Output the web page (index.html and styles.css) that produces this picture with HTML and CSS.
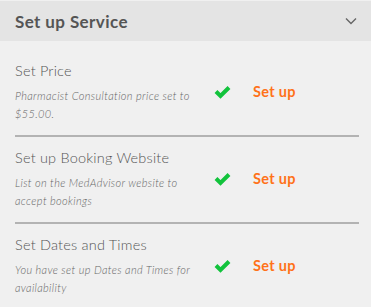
FILE: index.html
```html
<!DOCTYPE html>
<html>
<head>
<meta charset="utf-8">
<link rel="stylesheet" href="styles.css">
</head>
<body>
<div class="panel">
  <div class="header">
    <span class="header-title">Set up Service</span>
    <svg class="chev" width="12" height="8" viewBox="0 0 12 8"><polyline points="1,1.5 6,6.5 11,1.5" fill="none" stroke="#666" stroke-width="1.4"/></svg>
  </div>
  <div class="list">
    <div class="row">
      <div class="info">
        <div class="title">Set Price</div>
        <div class="desc">Pharmacist Consultation price set to $55.00.</div>
      </div>
      <svg class="check" width="17" height="14" viewBox="0 0 17 14"><polyline points="2,6.5 6.5,11 15,2.5" fill="none" stroke="#12c33c" stroke-width="4"/></svg>
      <span class="action">Set up</span>
    </div>
    <div class="row">
      <div class="info">
        <div class="title">Set up Booking Website</div>
        <div class="desc">List on the MedAdvisor website to accept bookings</div>
      </div>
      <svg class="check" width="17" height="14" viewBox="0 0 17 14"><polyline points="2,6.5 6.5,11 15,2.5" fill="none" stroke="#12c33c" stroke-width="4"/></svg>
      <span class="action">Set up</span>
    </div>
    <div class="row last">
      <div class="info">
        <div class="title">Set Dates and Times</div>
        <div class="desc">You have set up Dates and Times for availability</div>
      </div>
      <svg class="check" width="17" height="14" viewBox="0 0 17 14"><polyline points="2,6.5 6.5,11 15,2.5" fill="none" stroke="#12c33c" stroke-width="4"/></svg>
      <span class="action">Set up</span>
    </div>
  </div>
</div>
</body>
</html>
```
FILE: styles.css
```css
html, body {
  margin: 0;
  padding: 0;
  background: #f0f0f0;
}
body {
  font-family: Lato, "Open Sans", sans-serif;
  width: 371px;
  height: 307px;
  overflow: hidden;
}
.panel {
  padding-top: 1px;
}
.header {
  height: 40px;
  background: #e4e4e4;
  display: flex;
  align-items: center;
  justify-content: space-between;
  padding: 0 14px 0 15px;
}
.header-title {
  font-size: 17px;
  font-weight: 700;
  letter-spacing: 0.4px;
  color: #555;
}
.chev {
  display: block;
}
.list {
  padding: 9px 12px 0 15px;
}
.row {
  display: grid;
  grid-template-columns: 199px 39px auto;
  align-items: center;
  padding: 10px 0 12px;
  border-bottom: 2px solid #b3b3b3;
}
.row.last {
  border-bottom: none;
}
.title {
  font-size: 14.5px;
  font-weight: 300;
  letter-spacing: 0.2px;
  color: #555;
  line-height: 22px;
  margin-bottom: 5px;
}
.desc {
  font-size: 11px;
  font-style: italic;
  font-weight: 300;
  letter-spacing: 0.35px;
  color: #666;
  line-height: 18px;
  width: 185px;
}
.check {
  display: block;
}
.action {
  font-size: 14.5px;
  font-weight: 700;
  letter-spacing: 0.3px;
  color: #ff7219;
}
```
